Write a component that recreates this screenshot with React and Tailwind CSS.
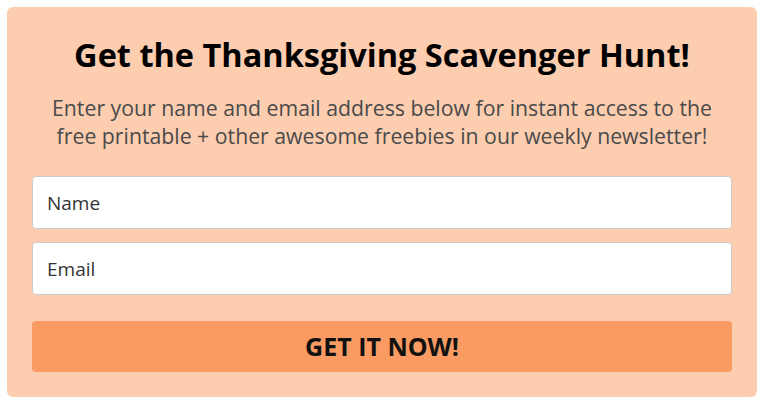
import React from 'react';

const App = () => {
    return (
        <div className="bg-white p-[7px] w-[764px] h-[403px]" style={{ fontFamily: '"Open Sans", sans-serif' }}>
            <div className="bg-[#fdcdb0] rounded-md w-[750px] h-[390px] px-[25px] pt-[26px]">
                <h1 className="text-center text-[32.5px] leading-[44px] font-bold text-black">
                    Get the Thanksgiving Scavenger Hunt!
                </h1>
                <p className="text-center text-[21.25px] leading-[28px] text-[#4a4a4a] mt-[17px] px-[10px]">
                    Enter your name and email address below for instant access to the free printable + other awesome freebies in our weekly newsletter!
                </p>
                <div className="mt-[26px] flex flex-col gap-[13px]">
                    <input
                        type="text"
                        placeholder="Name"
                        className="h-[53px] w-full bg-white border border-[#cccccc] rounded-[4px] px-[14px] text-[19px] placeholder:text-[#333] text-[#333] outline-none"
                    />
                    <input
                        type="email"
                        placeholder="Email"
                        className="h-[53px] w-full bg-white border border-[#cccccc] rounded-[4px] px-[14px] text-[19px] placeholder:text-[#333] text-[#333] outline-none"
                    />
                </div>
                <button className="mt-[26px] w-full h-[51px] bg-[#f99b62] rounded-[4px] text-[25px] font-bold text-[#111] uppercase">
                    Get it now!
                </button>
            </div>
        </div>
    );
};

export default App;
